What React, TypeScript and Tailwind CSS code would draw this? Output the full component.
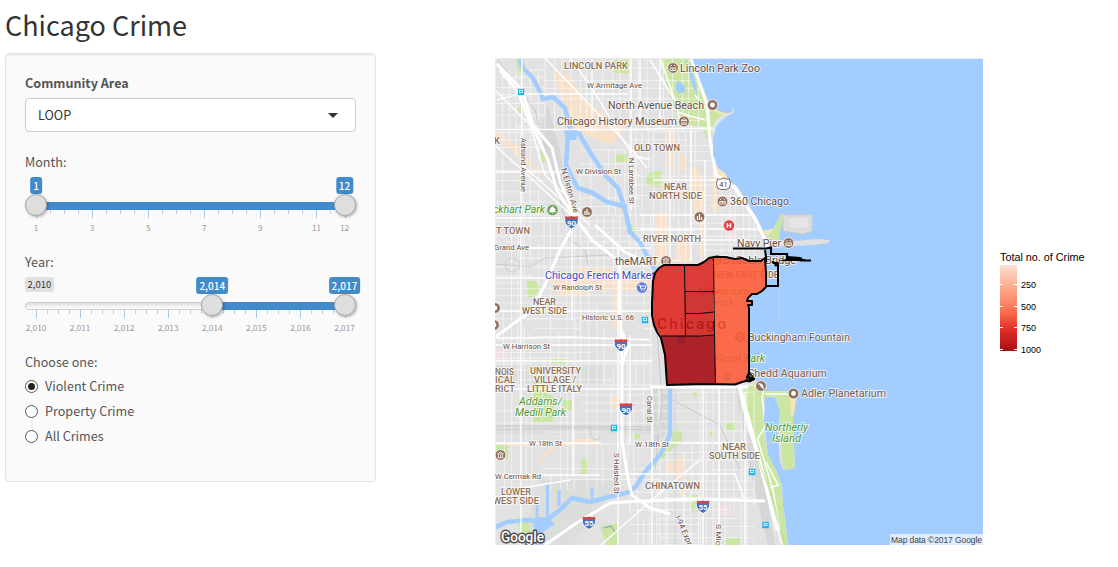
import React from "react";

const SANS = "font-['Noto_Sans_CJK_SC','Open_Sans',sans-serif]";

type Seg = [number, number, number, number];

function rng(seed: number) {
  let s = seed;
  return () => {
    s = (s * 16807) % 2147483647;
    return s / 2147483647;
  };
}

/* Broken street grid: each street is cut into random runs. */
function streets(x0: number, y0: number, x1: number, y1: number, dx: number, dy: number, seed: number): Seg[] {
  const r = rng(seed);
  const out: Seg[] = [];
  for (let x = x0; x < x1; x += dx * (0.7 + r() * 0.6)) {
    let y = y0;
    while (y < y1) {
      const len = 22 + r() * 70;
      if (r() > 0.2) out.push([x, y, x, Math.min(y1, y + len)]);
      y += len;
    }
  }
  for (let y = y0; y < y1; y += dy * (0.7 + r() * 0.6)) {
    let x = x0;
    while (x < x1) {
      const len = 18 + r() * 60;
      if (r() > 0.25) out.push([x, y, Math.min(x1, x + len), y]);
      x += len;
    }
  }
  return out;
}

const toPath = (s: Seg[]) => s.map((a) => `M${a[0].toFixed(1)} ${a[1].toFixed(1)}L${a[2].toFixed(1)} ${a[3].toFixed(1)}`).join("");

const MINOR = toPath([
  ...streets(545, 58, 700, 132, 8, 10, 71),
  ...streets(495, 70, 545, 215, 7, 9, 13),
  ...streets(630, 130, 760, 262, 6.5, 8, 29),
  ...streets(495, 215, 652, 385, 7.5, 8, 37),
  ...streets(495, 385, 660, 490, 8, 10, 41),
  ...streets(660, 385, 755, 545, 8, 9, 53),
  ...streets(630, 492, 700, 545, 8, 9, 59),
  ...streets(580, 150, 640, 215, 9, 11, 61),
]);

const LAND =
  "M495 58H692L697 72L703 88L708 101C715 112 727 115 732 112L733 106L734 112C728 116 722 118 716 127L713 138V155L718 168L725 173L728 180L738 187L747 202L757 218L763 231L773 229L781 214L785 214L780 230L778 245L766 249V287L760 292L752 296L749 300L752 303L749 308L750 368L755 378L757 382L765 383L763 391H793L797 397L793 418L795 468L783 470L780 462L778 435L780 412L775 397L765 397L764 420L768 455L775 468L782 485L783 505L785 518L788 545H495Z";

const PARKS = [
  "M660 58H692L703 88L710 103L725 112L716 120L713 126L712 138H706L703 126L680 125L676 112L668 90Z",
  "M516 58H524L523 76L517 68Z",
  "M613 60H629V73H613Z", "M518 108H522V113H518Z", "M541 151H545V162H541Z", "M616 155L627 154V162H616Z",
  "M647 175L657 171H661V187H652L646 183Z", "M527 281H534L541 287L534 297H528Z",
  "M533 382H546V392L553 397V422H533Z", "M563 400H572V410H563Z", "M551 359H566V364H551Z",
  "M495 445H508V459H495Z", "M581 459H588V474H581Z", "M600 526L617 523V545H607L603 535Z",
  "M495 378H500V384H495Z", "M518 524L528 522L533 545H525Z", "M634 434H640V439H634Z",
  "M672 430H682V442L667 453L661 462L663 452L672 443Z", "M726 538H740V545H726Z", "M691 495H698V511H691Z",
  "M755 383H765L763 391L793 392L797 397L793 418L795 468L783 470L780 435L780 412L775 396L765 398L762 408L764 435L768 455L775 468L782 485L783 505L788 545H783L770 495L758 452L742 405L740 392Z",
  "M626 224H632L637 231L632 236Z", "M693 392H697V396H693Z", "M726 423H735V430H726Z", "M710 430H713V436H710Z", "M773 229L781 214H786L779 245H762Z",
];

const COMMERCIAL = [
  "M552 73L570 75L583 100L612 120L625 127L611 146L576 130L560 93Z", "M668 128H674V165H668Z", "M680 155H686V170H680Z", "M655 213H668V262H655Z",
  "M690 168H697L706 190V220H695Z", "M712 172H717V212H712Z", "M675 240H690V262H675Z", "M700 212H706V257H700Z",
  "M577 268H612V276H650V291H577Z", "M548 277H590V296H558L552 284Z", "M611 397H623V408H611Z",
  "M497 130L520 148L543 176L538 174L515 153L496 138Z", "M667 463L679 457H684V478L671 475L664 469Z",
  "M680 478H684V500H680Z", "M572 439H596V445H574V455H571Z", "M495 443H570V446H495Z", "M552 445L556 447L540 463L538 460Z", "M613 288H619V330H613Z", "M700 395H705V398H700Z",
];

const RIVER =
  "M519 58L523 68L533 78L540 92L543 99L553 97L565 108L571 132M568 136L566 165L572 178L578 188L593 193L607 202L627 207M578 132L593 157L607 177L618 188L623 203L627 218L630 232L640 242L650 262L657 272M670 386V435L660 455L645 472L637 485L630 492L617 495L590 502L572 498L562 508L545 522L527 520L507 522L492 529";

const MAJOR = [
  "M495 129.5H628L713 128", "M497 100L520 94H628", "M522 58L521 210V545", "M592 58V132", "M495 172H566", "M631 58V210", "M618 245V545",
  "M572 215V320M573 380V474", "M495 218H560", "M640 58V120", "M495 361H652M652 387H745", "M495 389H650", "M495 443H601M659 443H745", "M495 475L600 475M615 474H735L744 498", "M495 345H652", "M495 338L570 337L650 340", "M495 278H560", "M520 248H652", "M495 311H652", "M630 335V445", "M652 385V545",
  "M703 385V545", "M719 385V545", "M745 392V545", "M670 130V262", "M691 125V262", "M705 160V262", "M654 180H745", "M640 215H755M640 240H750M640 229H760",
  "M660 58V130", "M545 58L628 145L647 168", "M570 58L590 85L632 155L650 160",
  "M495 90L530 125L545 175L585 215", "M495 145L572 216", "M522 165L590 225", "M601 545L654 498L700 460", "M495 500L522 488L570 480",
];

const HIGHWAYS = [
  "M497 64L522 90L533 125L552 148L560 182L577 220L592 240L620 262V305L622 360V440L627 474L632 495L650 508L670 514",
  "M500 70L518 92L528 118L540 142L548 160L557 190L572 214",
  "M545 545L575 524L610 503L640 501L700 499L765 501",
  "M495 337L530 312L545 285L560 250L571 230", "M595 225L625 252L645 262",
  "M622 332L628 345L622 365",
];

interface Lab { t: string; x: number; y: number; w: number; s?: number; c?: string; i?: boolean; b?: boolean; r?: number }
const BROWN = "#8d6e53";
const DARK = "#654c40";

const LABELS: Lab[] = [
  { t: "LINCOLN PARK", x: 564, y: 69, w: 64, s: 9.5, b: true },
  { t: "W Armitage Ave", x: 587, y: 88, w: 55, s: 8, c: DARK },
  { t: "North Avenue Beach", x: 608, y: 109, w: 96, s: 11, c: DARK },
  { t: "Chicago History Museum", x: 557, y: 125, w: 120, s: 11, c: DARK },
  { t: "Lincoln Park Zoo", x: 680, y: 72, w: 80, s: 11, c: DARK },
  { t: "OLD TOWN", x: 634, y: 151, w: 46, s: 9.5, b: true },
  { t: "W Division St", x: 576, y: 174, w: 45, s: 8, c: DARK },
  { t: "NEAR", x: 664, y: 190, w: 23, s: 9.5, b: true },
  { t: "NORTH SIDE", x: 649, y: 199, w: 53, s: 9.5, b: true },
  { t: "360 Chicago", x: 730, y: 205, w: 59, s: 11, c: DARK },
  { t: "RIVER NORTH", x: 643, y: 242, w: 58, s: 9.5, b: true },
  { t: "Navy Pier", x: 737, y: 247, w: 44, s: 11, c: DARK },
  { t: "DuSable Bridge", x: 723, y: 264, w: 73, s: 11, c: DARK },
  { t: "NEW EAST SIDE", x: 714, y: 278, w: 65, s: 9.5, b: true },
  { t: "Millennium", x: 698, y: 295, w: 51, s: 10.5, c: "#4d9a32", i: true },
  { t: "Park", x: 714, y: 306, w: 20, s: 10.5, c: "#4d9a32", i: true },
  { t: "theMART", x: 615, y: 265, w: 43, s: 11, c: DARK },
  { t: "Chicago French Market", x: 545, y: 279, w: 110, s: 11, c: "#3949c6" },
  { t: "W Randolph St", x: 553, y: 290, w: 49, s: 8, c: DARK },
  { t: "NEAR", x: 533, y: 305, w: 23, s: 9.5, b: true },
  { t: "WEST SIDE", x: 522, y: 314, w: 45, s: 9.5, b: true },
  { t: "Historic U.S. 66", x: 582, y: 320, w: 52, s: 8, c: DARK },
  { t: "W Harrison St", x: 503, y: 349, w: 47, s: 8, c: DARK },
  { t: "T TOWN", x: 496, y: 234, w: 34, s: 9.5, b: true },
  { t: "Grand Ave", x: 494, y: 250, w: 35, s: 8, c: DARK },
  { t: "NOIS", x: 495, y: 375, w: 19, s: 9.5, b: true },
  { t: "ICAL", x: 495, y: 383, w: 20, s: 9.5, b: true },
  { t: "RICT", x: 495, y: 392, w: 20, s: 9.5, b: true },
  { t: "UNIVERSITY", x: 530, y: 374, w: 51, s: 9.5, b: true },
  { t: "VILLAGE /", x: 534, y: 383, w: 42, s: 9.5, b: true },
  { t: "LITTLE ITALY", x: 527, y: 392, w: 55, s: 9.5, b: true },
  { t: "Addams/", x: 519, y: 405, w: 43, s: 10.5, c: "#4d9a32", i: true },
  { t: "Medill Park", x: 515, y: 416, w: 51, s: 10.5, c: "#4d9a32", i: true },
  { t: "ckhart Park", x: 493, y: 213, w: 52, s: 10.5, c: "#4d9a32", i: true },
  { t: "W 18th St", x: 529, y: 446, w: 33, s: 8, c: DARK },
  { t: "W 18th St", x: 635, y: 447, w: 34, s: 8, c: DARK },
  { t: "W Cermak Rd", x: 495, y: 479, w: 46, s: 8, c: DARK },
  { t: "LOWER", x: 501, y: 495, w: 30, s: 9.5, b: true },
  { t: "WEST SIDE", x: 493, y: 504, w: 46, s: 9.5, b: true },
  { t: "CHINATOWN", x: 645, y: 489, w: 55, s: 9.5, b: true },
  { t: "NEAR", x: 722, y: 450, w: 24, s: 9.5, b: true },
  { t: "SOUTH SIDE", x: 709, y: 459, w: 51, s: 9.5, b: true },
  { t: "Northerly", x: 765, y: 431, w: 43, s: 10.5, c: "#4d9a32", i: true },
  { t: "Island", x: 772, y: 442, w: 29, s: 10.5, c: "#4d9a32", i: true },
  { t: "Buckingham Fountain", x: 748, y: 341, w: 102, s: 11, c: "#76594a" },
  { t: "Grant Park", x: 716, y: 362, w: 49, s: 10.5, c: "#4d9a32", i: true },
  { t: "Shedd Aquarium", x: 748, y: 377, w: 79, s: 11, c: "#76594a" },
  { t: "Adler Planetarium", x: 801, y: 397, w: 85, s: 11, c: "#76594a" },
  { t: "Ashland Avenue", x: 521, y: 138, w: 54, s: 8, c: DARK, r: 90 },
  { t: "N Elston Ave", x: 561, y: 169, w: 46, s: 8, c: DARK, r: 74 },
  { t: "N Larrabee St", x: 629, y: 158, w: 46, s: 8, c: DARK, r: 90 },
  { t: "S Halsted St", x: 614, y: 453, w: 41, s: 8, c: DARK, r: 90 },
  { t: "Canal St", x: 647, y: 396, w: 27, s: 8, c: DARK, r: 90 },
  { t: "I-94 Express", x: 675, y: 517, w: 44, s: 8, c: DARK, r: 66 },
  { t: "S Michigan", x: 716, y: 524, w: 42, s: 8, c: DARK, r: 90 },
  { t: "K", x: 494, y: 144, w: 6, s: 9.5, b: true },
];

function MapLabel({ l }: { l: Lab }) {
  return (
    <text
      x={l.x}
      y={l.y}
      textLength={l.w}
      lengthAdjust="spacingAndGlyphs"
      transform={l.r ? `rotate(${l.r} ${l.x} ${l.y})` : undefined}
      fontSize={l.s}
      fontStyle={l.i ? "italic" : "normal"}
      fontWeight={l.b ? 500 : 400}
      fill={l.c ?? BROWN}
      stroke="#fff"
      strokeWidth="1.8"
      strokeOpacity=".75"
      strokeLinejoin="round"
      paintOrder="stroke"
    >
      {l.t}
    </text>
  );
}

function Shield({ x, y, n }: { x: number; y: number; n: string }) {
  return (
    <g transform={`translate(${x} ${y})`}>
      <path d="M-6-6Q-3-4.800 0-6Q3-4.800 6-6Q8 0 5 3Q3 5.500 0 7Q-3 5.500-5 3Q-8 0-6-6Z" fill="#3f74c4" stroke="#fff" strokeWidth="1" />
      <path d="M-6-6Q-3-4.800 0-6Q3-4.800 6-6L6.500-3H-6.500Z" fill="#d8473f" />
      <text x="0" y="3.800" textAnchor="middle" fontSize="8" fontWeight="700" fill="#fff">{n}</text>
    </g>
  );
}

type PinKind = "dot" | "face" | "museum" | "fish" | "bars";
function Pin({ x, y, k = "dot" }: { x: number; y: number; k?: PinKind }) {
  return (
    <g transform={`translate(${x} ${y})`}>
      <circle r="5.400" fill="#8f6e5b" stroke="#fff" strokeWidth=".8" />
      {k === "dot" && <circle r="2.400" fill="#fff" />}
      {k === "face" && <path d="M-2.500-1.500L-1-3M2.500-1.500L1-3M-2.800 0H2.800V2.500H-2.800ZM-1 1H1" stroke="#fff" fill="none" strokeWidth=".9" />}
      {k === "museum" && <path d="M-3-1L0-3L3-1ZM-2 0V2.500M0 0V2.500M2 0V2.500M-3 2.800H3" stroke="#fff" fill="none" strokeWidth=".8" />}
      {k === "fish" && <path d="M-3-2Q2-3 2 2M-1-1L3 3" stroke="#fff" fill="none" strokeWidth="1.200" />}
      {k === "bars" && <path d="M-2 3V-1M0 3V-3M2 3V0" stroke="#fff" strokeWidth="1.200" />}
    </g>
  );
}

function Station({ x, y }: { x: number; y: number }) {
  return (
    <g transform={`translate(${x} ${y})`}>
      <rect x="-3.200" y="-3.200" width="6.400" height="6.400" fill="#19b2f5" />
      <rect x="-1.500" y="-1.700" width="3" height="2.400" fill="none" stroke="#fff" strokeWidth=".8" />
    </g>
  );
}

function CityMap() {
  return (
    <svg className="block h-[487px] w-[488px] shrink-0 font-[Roboto,sans-serif]" viewBox="495 58 488 487" role="img" aria-label="Chicago map">
      <defs>
        <clipPath id="land"><path d={LAND} /></clipPath>
      </defs>
      <rect x="495" y="58" width="488" height="487" fill="#a3ccff" />
      <path d={LAND} fill="#e2e2e2" />
      <g clipPath="url(#land)">
        <path d="M495 364H602V385H495ZM495 425H652V434H495ZM540 480H620L572 545H520Z" fill="#dcdedb" />
        <path d="M548 105L560 150L566 190L582 212L570 212L552 180L540 130ZM653 385H667V430L655 450ZM735 385H742L757 450L766 492L775 545H768L750 470Z" fill="#d6d6d6" />
        <path d="M495 349H507V362H495ZM725 215H735V240H725ZM720 505H732V515H720Z" fill="#f0e0e8" />
        <path d="M740 400H760V428H745Z" fill="#d5e2cd" />
        {COMMERCIAL.map((d) => <path key={d} d={d} fill="#f7e1cb" />)}
        {PARKS.map((d) => <path key={d} d={d} fill="#cbe6a3" />)}
        <path d="M692 58L696 58L704 84L712 103L726 113L733 111L732 115L716 113L704 99ZM718 168L726 174L728 180L719 179L717 171ZM763 229H773L770 234H760ZM790 397L795 400V416H791Z" fill="#f5e4b5" />
        <path d={MINOR} stroke="#fff" strokeWidth=".85" fill="none" opacity=".65" />
        <path d="M498 60L535 110L550 165L567 225M495 430L570 428L652 430M495 426L652 427M652 262L662 400L655 470M675 385V545M663 395L720 425L740 470M495 264L530 267L545 258L610 255M512 258a7 7 0 1 0 1 0M588 265L585 250L565 236M600 438Q590 445 590 425" stroke="#cacaca" strokeWidth="1" fill="none" />
        <path d={RIVER} stroke="#a3ccff" strokeWidth="4.500" fill="none" strokeLinejoin="round" />
        <path d="M564 130H578L576 140H566ZM533 521L540 517H548L555 524L543 532L542 545H536Z" fill="#a3ccff" />
        <path d="M547.500 484V522M559 490V506M592 488V502M537 505V522" stroke="#a3ccff" strokeWidth="3" fill="none" />
        <path d="M678 80L686 87L684 93H678L675 88ZM686 58L696 82L697 95L691 82Z" fill="#a3ccff" />
        {MAJOR.map((d) => <path key={d} d={d} stroke="#fff" strokeWidth="1.400" fill="none" />)}
        {HIGHWAYS.map((d) => <path key={d} d={d} stroke="#fff" strokeWidth="3" fill="none" strokeLinejoin="round" />)}
        <path d="M691 58L707 105L710 140L716 175L735 188L756 220L765 240L770 252" stroke="#fff" strokeWidth="3.200" fill="none" />
        <path d="M678 112L690 116L705 120M660 58L675 100L681 125M650 60L678 105M695 95L709 112" stroke="#fff" strokeWidth="1.500" fill="none" />
        <path d="M738 386L749 430L759 460L770 500L782 545M758 440L773 490L780 530M765 384L762 398L766 425L757 440M765 394H792M766 462L778 485L770 488" stroke="#fff" strokeWidth="1.500" fill="none" />
        <path d="M740 387L758 455L777 530" stroke="#fff" strokeWidth="3.500" fill="none" />
        <path d="M758 460L774 502L785 545" stroke="#b9d78f" strokeWidth=".7" fill="none" />
        <path d="M650 387H748" stroke="#fff" strokeWidth="3" />
        <path d="M604 528L611 526L615 532" stroke="#6a9cd5" fill="none" />
      </g>
      <path d="M783 215H812V231L803 234L783 231Z" fill="#dedede" stroke="#cbcbcb" />
      <path d="M787 217H809V228L789 229Z" fill="#e4e4e4" stroke="#d2d2d2" strokeWidth=".7" />
      <path d="M771 240L795 241L816 239L830 240L828 243L814 245L772 247Z" fill="#dfe1e2" />
      <path d="M779 257V325" stroke="#bad8fc" strokeWidth=".8" />
      <path d="M495.500 58V545M495 58.500H983" stroke="#ebebeb" />

      {LABELS.map((l) => <MapLabel key={`${l.t}-${l.x}-${l.y}`} l={l} />)}
      <text x="657" y="329" textLength="69" lengthAdjust="spacing" fontSize="15.500" fontWeight="500" fill="#111">Chicago</text>

      <Shield x={571.500} y={222} n="90" />
      <Shield x={621} y={345} n="90" />
      <Shield x={626} y={409} n="90" />
      <Shield x={589} y={522.500} n="55" />
      <Shield x={703} y={506.500} n="55" />
      <g transform="translate(723.500 184)">
        <path d="M-6-5Q-3-4 0-6Q3-4 6-5Q8 0 6 4Q3 6 0 5.500Q-3 6-6 4Q-8 0-6-5Z" fill="#fff" stroke="#67534d" strokeWidth=".9" />
        <text y="3" textAnchor="middle" fontSize="7.500" fill="#514742">41</text>
      </g>
      <Pin x={673} y={68} k="face" />
      <Pin x={712.500} y={105} />
      <Pin x={684} y={121.500} k="museum" />
      <Pin x={722.500} y={201.500} k="face" />
      <Pin x={699.500} y={217} k="bars" />
      <Pin x={587} y={212} k="bars" />
      <Pin x={788.500} y={243} k="face" />
      <Pin x={666} y={261} k="museum" />
      <Pin x={761} y={386} k="fish" />
      <Pin x={793.500} y={393.500} />
      <Pin x={500.500} y={455} k="museum" />
      <Pin x={495} y={308} />
      <Pin x={494} y={325} />
      <Pin x={740} y={337} k="museum" />
      <Pin x={717} y={260} k="museum" />
      <Station x={681} y={340} />
      <Station x={727} y={377} />
      <circle cx="729" cy="225.500" r="5.200" fill="#e2403f" />
      <text x="729" y="228.300" textAnchor="middle" fontSize="7.500" fontWeight="700" fill="#fff">H</text>
      <circle cx="552.500" cy="210" r="5.200" fill="#66a34b" />
      <path d="M552.500 206L555.500 210H554L556 212H549L551 210H549.500ZM552.500 212V214" fill="#fff" stroke="#fff" strokeWidth=".5" />
      <circle cx="642" cy="287.500" r="5.200" fill="#6679dc" />
      <path d="M638.500 285H640L641 289H645L646 286H640.500M641.500 290.500V291M644.500 290.500V291" stroke="#fff" fill="none" strokeWidth="1" />
      <Station x={521} y={92} />
      <Station x={645} y={320} />
      <Station x={614} y={428} />
      <Station x={752} y={472} />
      <Station x={765.500} y={525} />

      <g fillOpacity=".87">
        <path d="M652 303L654 275L658 269L664 265L684.500 266L685.500 336H661L654 325Z" fill="#de231e" />
        <path d="M684.500 266L698 265L704 262L709 258L713.500 257V291.500H685Z" fill="#da221d" />
        <path d="M685 291.500H713.500V312L700 313.500H685Z" fill="#cb1b19" />
        <path d="M685 313.500H700L713.500 312L714 335.500L685.500 336Z" fill="#cf1d19" />
        <path d="M661 336H700L714.500 335.500L715.500 384.500L667 385L665 355Z" fill="#a5060d" />
        <path d="M713.500 257L725 257L742 259L757 261H765L766 287L760 292L752 295.500L748 298L749 301H752L751 305H748L750 308V372L745 381L735 384H715.500Z" fill="#fd5734" />
      </g>
      <path d="M684.500 265L685.500 336M713.500 257L714.500 335L715.500 384M685 291.500H714M685 313.500H700L714 312M661 336H700L714.500 335" fill="none" stroke="#000" />
      <path d="M745 381L750 373L755 379L750 382Z" fill="#555" stroke="#000" />
      <path d="M652 303L653 281L655 273L659 268L664 265H684L698 265L704 262L709 258L714 257L725 257L735 259L742 258L749 261L761 261L765 258L766 273V287L762 291L757 294H752L748 298L747 301H752V305H748L749 308V373L747 377L754 379L746 381L742 382L735 384.500L705 384L667 385L665 355L661 338L657 332L654 325L652 315Z" fill="none" stroke="#000" strokeWidth="2" strokeLinejoin="round" />
      <path d="M733 248.500H766L771 247.500V254H787V258.500H801V260.500H811" fill="none" stroke="#000" strokeWidth="2.200" />
      <path d="M766 262V257L765 250M772 262L778 264V286H766M786 260H805" fill="none" stroke="#000" strokeWidth="2" />
      <path d="M772 262L779 262L776 267ZM787 256L800 257L802 261H778L787 259Z" fill="#000" />

      <text x="501" y="541.500" textLength="43" lengthAdjust="spacingAndGlyphs" fontSize="15" fontWeight="500" fill="#fff" stroke="#4b4b4b" strokeWidth="3" strokeLinejoin="round" paintOrder="stroke">Google</text>
      <rect x="890" y="534" width="93" height="11" fill="#dfecfc" />
      <text x="891" y="543" textLength="91" lengthAdjust="spacing" fontFamily="Liberation Sans, sans-serif" fontSize="8.500" fill="#444">Map data ©2017 Google</text>
    </svg>
  );
}

interface Tick { at: number; label?: string }
interface SliderProps { from: string; to: string; low: number; min?: string; ticks: Tick[] }

/* Range slider: positions run from the first tick (0) to the last (1). */
function RangeSlider({ from, to, low, min, ticks }: SliderProps) {
  const pos = (v: number) => `${11 + v * 308.5}px`;
  return (
    <div className="relative h-[60px] w-[330px] text-[9.5px] leading-[15px]">
      {min && <span className="absolute top-0 left-0 rounded-[3px] bg-[#e1e1e1] px-[2.5px] text-[#333]">{min}</span>}
      <div className="absolute top-[25px] h-2 w-full rounded-lg border border-[#ccc] bg-gradient-to-b from-[#dedede] to-white" />
      <div className="absolute top-[25px] h-2 bg-[#428bca]" style={{ left: pos(low), right: "10px" }} />
      {ticks.map((t) => (
        <React.Fragment key={t.at}>
          <i className={t.label ? "absolute top-[33px] h-2 w-px bg-[#a5c9e9]" : "absolute top-[33px] h-1 w-px bg-[#ccc]"} style={{ left: pos(t.at) }} />
          {t.label && (
            <span className="absolute top-[43px] -translate-x-1/2 text-[8.2px] text-[#999]" style={{ left: pos(t.at) }}>{t.label}</span>
          )}
        </React.Fragment>
      ))}
      {[{ v: low, l: from }, { v: 1, l: to }].map((h) => (
        <React.Fragment key={h.l}>
          <span className="absolute top-0 -translate-x-1/2 rounded-[3px] bg-[#428bca] px-[3px] pt-px pb-px text-[10px] font-medium text-white" style={{ left: pos(h.v) }}>{h.l}</span>
          <span className="absolute top-[17px] size-[22px] -translate-x-1/2 rounded-full border border-[#aaa] bg-[#dedede] shadow-[1px_1px_3px_rgba(0,0,0,0.3)]" style={{ left: pos(h.v) }} />
        </React.Fragment>
      ))}
    </div>
  );
}

const monthTicks: Tick[] = [
  ...Array.from({ length: 22 }, (_, i) => ({ at: i / 22, label: i % 4 === 0 ? String(1 + i / 2) : undefined })),
  { at: 1, label: "12" },
];
const yearTicks: Tick[] = Array.from({ length: 29 }, (_, i) => ({ at: i / 28, label: i % 4 === 0 ? `2,0${10 + i / 4}` : undefined }));

function Radio({ label, checked }: { label: string; checked?: boolean }) {
  return (
    <label className="flex h-[25px] items-center gap-[7px]">
      <span className="grid size-[13px] place-items-center rounded-full border border-[#555] bg-white">
        {checked && <span className="size-[7px] rounded-full bg-[#222]" />}
      </span>
      <span>{label}</span>
    </label>
  );
}

export default function App() {
  return (
    <div className={`flex h-[567px] w-[1118px] flex-col overflow-hidden bg-white text-[12.6px] text-[#555] ${SANS}`}>
      <main className="flex">
        <div className="box-content flex w-[371px] shrink-0 flex-col pl-[5px]">
          <h1 className="h-[53px] pt-[8px] text-[27px] leading-[34px] whitespace-nowrap text-[#333]">Chicago Crime</h1>
          <section className="h-[429px] rounded border border-[#e3e3e3] bg-[#fafafa] px-[19px] pt-[19px] shadow-[inset_0_2px_1px_rgba(0,0,0,0.05)]">
            <h2 className="h-[25px] text-[12.6px] leading-[20px] font-bold">Community Area</h2>
            <div className="flex h-[34px] w-[331px] items-center justify-between rounded border border-[#ccc] bg-white pr-[17px] pl-3 text-[#333]">
              <span>LOOP</span>
              <i className="border-x-[5px] border-t-[5px] border-x-transparent border-t-[#333]" />
            </div>
            <p className="mt-[20px] mb-[5px] h-5 leading-5">Month:</p>
            <RangeSlider from="1" to="12" low={0} ticks={monthTicks} />
            <p className="mt-[15px] mb-[5px] h-5 leading-5">Year:</p>
            <RangeSlider from="2,014" to="2,017" low={4 / 7} min="2,010" ticks={yearTicks} />
            <p className="mt-[15px] mb-[2px] h-5 leading-5">Choose one:</p>
            <Radio label="Violent Crime" checked />
            <Radio label="Property Crime" />
            <Radio label="All Crimes" />
          </section>
        </div>
        <div className="ml-[119px] flex pt-[58px]">
          <CityMap />
          <aside className="ml-[17px] w-[100px] pt-[192px] font-['Liberation_Sans',sans-serif] text-black">
            <h3 className="h-[15px] text-[10.8px] leading-[15px] whitespace-nowrap">Total no. of Crime</h3>
            <div className="flex">
              <div className="relative h-[86px] w-[17px] bg-[linear-gradient(to_bottom,#fee0d2_0%,#fcbba1_18%,#fc9272_38%,#fb6a4a_56%,#de2d26_76%,#a50f15_100%)]">
                {[19, 41, 62, 84].map((y) => (
                  <div key={y} className="absolute flex w-full justify-between" style={{ top: `${y}px` }}>
                    <i className="h-px w-[3px] bg-white" />
                    <i className="h-px w-[3px] bg-white" />
                  </div>
                ))}
              </div>
              <div className="flex flex-col pt-[10px] pl-1 text-[9px] leading-[21.700px]">
                <span>250</span>
                <span>500</span>
                <span>750</span>
                <span>1000</span>
              </div>
            </div>
          </aside>
        </div>
      </main>
    </div>
  );
}
